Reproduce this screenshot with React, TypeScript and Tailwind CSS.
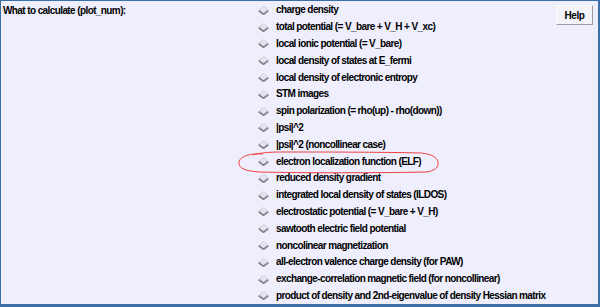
import React from "react";

const items = [
  "charge density",
  "total potential (= V_bare + V_H + V_xc)",
  "local ionic potential (= V_bare)",
  "local density of states at E_fermi",
  "local density of electronic entropy",
  "STM images",
  "spin polarization (= rho(up) - rho(down))",
  "|psi|^2",
  "|psi|^2 (noncollinear case)",
  "electron localization function (ELF)",
  "reduced density gradient",
  "integrated local density of states (ILDOS)",
  "electrostatic potential (= V_bare + V_H)",
  "sawtooth electric field potential",
  "noncolinear magnetization",
  "all-electron valence charge density (for PAW)",
  "exchange-correlation magnetic field (for noncollinear)",
  "product of density and 2nd-eigenvalue of density Hessian matrix",
];

function Diamond() {
  return (
    <svg width="11" height="9" viewBox="0 0 11 9" className="shrink-0">
      <polygon points="5.5,0.5 10.5,4.5 5.5,8.5 0.5,4.5" fill="#e4e4ec" />
      <polyline points="0.5,4.5 5.5,0.5 10.5,4.5" fill="none" stroke="#d0d0d8" strokeWidth="1" />
      <polyline points="0.8,4.8 5.5,8.3 10.2,4.8" fill="none" stroke="#84848c" strokeWidth="1.7" />
    </svg>
  );
}

export default function App() {
  const font = { fontFamily: '"Liberation Sans", Arial, sans-serif' };
  return (
    <div
      className="relative w-[600px] h-[307px] bg-[#eeeefd] border-t border-l border-r-2 border-b-[3px] border-[#3c6ea8] text-black overflow-hidden"
      style={font}
    >
      <div className="flex pt-[1px]">
        <div className="w-[254px] pl-[2px] h-[16.8px] flex items-center text-[10px] font-bold tracking-[-0.6px]">
          What to calculate (plot_num):
        </div>
        <div className="flex flex-col flex-1">
          {items.map((t) => (
            <div key={t} className="h-[16.8px] flex items-center gap-[7px] pl-[3px]">
              <Diamond />
              <span className="text-[10px] font-bold tracking-[-0.6px] whitespace-nowrap leading-none">{t}</span>
            </div>
          ))}
        </div>
        <div className="pt-[3px] pr-[5px]">
          <button className="w-[37px] h-[20px] bg-[#f2f2f8] border border-t-[#ffffff] border-l-[#ffffff] border-r-[#9a9aa4] border-b-[#9a9aa4] text-[10px] font-bold tracking-[-0.4px] flex items-center justify-center">
            Help
          </button>
        </div>
      </div>
      <svg
        className="absolute left-0 top-0 pointer-events-none"
        width="600"
        height="307"
        viewBox="0 0 600 307"
      >
        <path
          d="M262,153 C250,152 239,155 238,161 C237,167 244,170 258,171 C300,172 380,172 425,171 C434,170 438,166 437,161 C436,156 430,153 420,152 C380,151 320,151 280,151 C268,151 258,152 252,154"
          fill="none"
          stroke="#f04040"
          strokeWidth="1"
        />
      </svg>
    </div>
  );
}
